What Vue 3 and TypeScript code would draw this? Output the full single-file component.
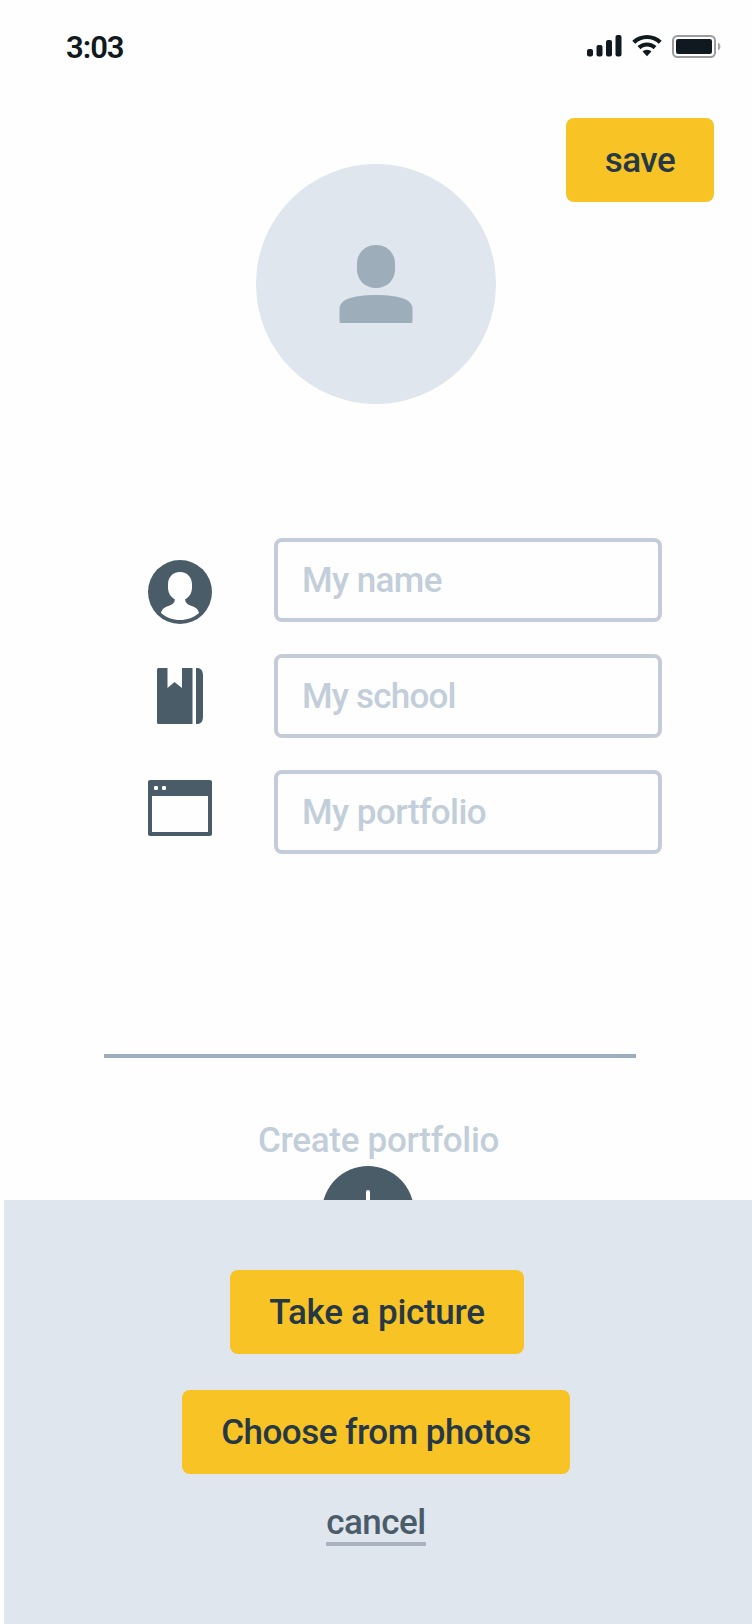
<script setup lang="ts">
import { ref } from 'vue'

type FieldIcon = 'person' | 'book' | 'window'

interface Field {
  icon: FieldIcon
  placeholder: string
}

const fields: Field[] = [
  { icon: 'person', placeholder: 'My name' },
  { icon: 'book', placeholder: 'My school' },
  { icon: 'window', placeholder: 'My portfolio' },
]

const values = ref<string[]>(fields.map(() => ''))
const sheetOpen = ref(true)
</script>

<template>
  <main class="screen">
    <header class="status">
      <span class="time">3:03</span>
      <div class="indicators">
        <svg class="signal" width="36" height="22" viewBox="0 0 36 22">
          <rect x="0" y="14" width="6" height="7.5" rx="2" />
          <rect x="9.5" y="10" width="6" height="11.5" rx="2" />
          <rect x="19" y="5" width="6" height="16.5" rx="2" />
          <rect x="28.5" y="0" width="6" height="21.5" rx="2" />
        </svg>
        <svg class="wifi" width="30" height="22" viewBox="0 0 30 22">
          <path d="M15 0C9.300 0 4.200 2.100 .3 5.800L3.200 8.800C6.300 5.700 10.500 3.900 15 3.900S23.700 5.700 26.800 8.800L29.700 5.800C25.800 2.100 20.700 0 15 0Z" />
          <path d="M15 7.400C11.300 7.400 8 8.800 5.500 11.100L8.500 14.200C10.200 12.500 12.500 11.500 15 11.500S19.800 12.500 21.500 14.200L24.500 11.100C22 8.800 18.700 7.400 15 7.400Z" />
          <path d="M15 14.700C13.200 14.700 11.700 15.400 10.600 16.600L15 21.300L19.400 16.600C18.300 15.400 16.800 14.700 15 14.700Z" />
        </svg>
        <svg class="battery" width="50" height="24" viewBox="0 0 50 24">
          <rect x="1" y="1" width="42" height="21" rx="4.500" fill="none" stroke="#9c9c9e" stroke-width="2" />
          <rect x="4" y="4" width="36" height="15" rx="2.200" />
          <path d="M46 7.500C49.200 9 49.200 14 46 15.500Z" fill="#a8a6a8" />
        </svg>
      </div>
    </header>

    <div class="toolbar">
      <button class="btn save" type="button">save</button>
    </div>

    <div class="avatar">
      <svg width="74" height="78" viewBox="-0.5 0 74 78">
        <path d="M36.500 0C47.500 0 55.500 8 55.500 18.500V24.500C55.500 35 47.500 43 36.500 43S17.500 35 17.500 24.500V18.500C17.500 8 25.500 0 36.500 0Z" />
        <path d="M0 76.500V64C0 59.500 3 56 8 54C15 51.200 25 50 36.500 50S58 51.200 65 54C70 56 73 59.500 73 64V76.500Q73 78 71.500 78H1.500Q0 78 0 76.500Z" />
      </svg>
    </div>

    <form class="fields" @submit.prevent>
      <label v-for="(field, i) in fields" :key="field.icon" class="field">
        <span class="field-icon" :class="field.icon">
          <svg v-if="field.icon === 'person'" width="64" height="64" viewBox="0 0 64 64">
            <circle cx="32" cy="32" r="32" />
            <path
              fill="#fff"
              d="M32 12C24.500 12 20 17.500 20 24.500V27.500C20 33 22.700 37 27 39.500C26.500 43 24.500 44.500 21 45.700C17 47 14 48.500 13 53C18 57.500 25 60 32 60S46 57.500 51 53C50 48.500 47 47 43 45.700C39.500 44.500 37.500 43 37 39.500C41.300 37 44 33 44 27.500V24.500C44 17.500 39.500 12 32 12Z"
            />
          </svg>
          <svg v-else-if="field.icon === 'book'" width="46" height="56" viewBox="0 0 46 56">
            <path d="M1.500 0H10.500V20L17.500 14L25 20V0H35.500V56H1.500Q0 56 0 54.500V1.500Q0 0 1.500 0Z" />
            <path d="M39 0H41Q46 1 46 7V49Q46 55 41 56H39Z" />
          </svg>
          <svg v-else width="64" height="56" viewBox="0 0 64 56">
            <path
              fill-rule="evenodd"
              d="M2 0H62Q64 0 64 2V54Q64 56 62 56H2Q0 56 0 54V2Q0 0 2 0ZM4 16V52H60V16ZM7 6H9Q10 6 10 7V9Q10 10 9 10H7Q6 10 6 9V7Q6 6 7 6ZM15 6H17Q18 6 18 7V9Q18 10 17 10H15Q14 10 14 9V7Q14 6 15 6Z"
            />
          </svg>
        </span>
        <input v-model="values[i]" class="input" :class="field.icon" type="text" :placeholder="field.placeholder" />
      </label>
    </form>

    <hr class="divider" />

    <p class="create">Create portfolio</p>
    <button class="add" type="button" aria-label="Add">
      <svg width="92" height="92" viewBox="0 0 92 92">
        <circle cx="46" cy="46" r="46" />
        <path d="M46 26V66M26 46H66" stroke="#fff" stroke-width="4" stroke-linecap="round" />
      </svg>
    </button>

    <section v-if="sheetOpen" class="sheet">
      <button class="btn take" type="button">Take a picture</button>
      <button class="btn choose" type="button">Choose from photos</button>
      <button class="cancel" type="button" @click="sheetOpen = false">cancel</button>
    </section>
  </main>
</template>

<style>
body {
  margin: 0;
  background: #fefefe;
}
</style>

<style scoped>
.screen {
  position: relative;
  display: flex;
  flex-direction: column;
  width: 752px;
  height: 1624px;
  overflow: hidden;
  box-sizing: border-box;
  background: #fefefe;
  font-family: Roboto, "Liberation Sans", sans-serif;
  font-weight: 500;
  font-size: 35px;
  color: #263845;
}

.screen * {
  box-sizing: border-box;
}

button {
  margin: 0;
  padding: 0;
  border: 0;
  background: none;
  font: inherit;
  color: inherit;
}

svg {
  display: block;
}

.status {
  display: flex;
  justify-content: space-between;
  height: 118px;
  padding: 35px 30px 0 66px;
  color: #101820;
}

.time {
  height: 26px;
  font-size: 31px;
  font-weight: 600;
  line-height: 26px;
  letter-spacing: -1px;
}

.indicators {
  display: flex;
  align-items: flex-start;
  height: 24px;
  fill: #101820;
}

.signal {
  margin-right: 9px;
}

.wifi {
  margin-right: 10px;
}

.toolbar {
  display: flex;
  justify-content: flex-end;
  height: 46px;
  padding-right: 38px;
}

.btn {
  height: 84px;
  flex: none;
  padding-top: 2px;
  border-radius: 8px;
  background: #f7c325;
  line-height: 82px;
  white-space: nowrap;
}

.save {
  width: 148px;
  letter-spacing: -0.5px;
}

.avatar {
  display: flex;
  flex: none;
  justify-content: center;
  width: 240px;
  height: 240px;
  margin: 0 auto;
  padding-top: 81px;
  border-radius: 50%;
  background: #dfe6ee;
  fill: #9dadb9;
}

.fields {
  display: flex;
  flex-direction: column;
  gap: 32px;
  margin: 134px 90px 0 148px;
}

.field {
  display: flex;
  gap: 62px;
  height: 84px;
}

.field-icon {
  display: flex;
  justify-content: center;
  width: 64px;
  fill: #4b5c69;
}

.field-icon.person {
  padding-top: 22px;
}

.field-icon.book {
  padding-top: 14px;
}

.field-icon.window {
  padding-top: 10px;
}

.input {
  width: 388px;
  height: 84px;
  padding: 1px 24px 0;
  border: 4px solid #c4cdd7;
  border-radius: 8px;
  outline: none;
  background: #fefefe;
  font: inherit;
  letter-spacing: -0.6px;
  color: #263845;
}

.input.book {
  letter-spacing: -0.8px;
}

.input.window {
  letter-spacing: -0.55px;
}

.input::placeholder {
  color: #c2ced9;
  opacity: 1;
}

.divider {
  flex: none;
  width: 532px;
  height: 4px;
  margin: 200px 0 0 104px;
  border: 0;
  background: #9dadbb;
}

.create {
  height: 42px;
  margin: 62px 0 0 258px;
  color: #c2ced9;
  line-height: 42px;
  letter-spacing: -0.3px;
  white-space: nowrap;
}

.add {
  flex: none;
  width: 92px;
  height: 92px;
  margin: 4px 0 0 322px;
  fill: #4b5c69;
}

.sheet {
  position: absolute;
  inset: 1200px 0 0 4px;
  display: flex;
  flex-direction: column;
  align-items: center;
  padding: 70px 4px 0 0;
  background: #dfe6ee;
}

.take {
  width: 294px;
  margin-left: 2px;
  letter-spacing: -0.3px;
}

.choose {
  width: 388px;
  margin-top: 36px;
  letter-spacing: -0.52px;
}

.cancel {
  width: 100px;
  height: 46px;
  margin-top: 26px;
  padding-top: 2px;
  border-bottom: 4px solid #a9b4c0;
  color: #4b5c69;
  line-height: 42px;
  letter-spacing: -0.5px;
  white-space: nowrap;
}
</style>
